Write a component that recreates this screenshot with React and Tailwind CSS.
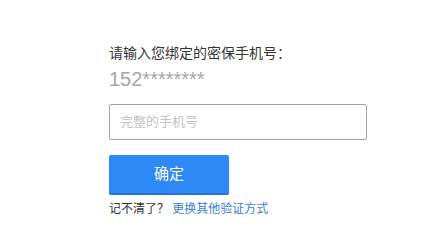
export default function App() {
  const font = { fontFamily: '"Liberation Sans", "Noto Sans CJK SC", sans-serif' };
  return (
    <div className="w-[422px] h-[246px] bg-white overflow-hidden" style={font}>
      <div className="pl-[109px] pt-[43px] flex flex-col items-start">
        <div className="text-[14px] leading-[20px] text-[#333333]">请输入您绑定的密保手机号：</div>
        <div className="mt-[4px] h-[24px] text-[20px] leading-[24px] text-[#a6a6a6]">152********</div>
        <div className="mt-[13px] w-[258px] h-[36px] border border-[#a3a3a3] rounded-[2px] flex items-center pl-[10px]">
          <span className="text-[13px] text-[#c4c4c4]">完整的手机号</span>
        </div>
        <div className="mt-[15px] w-[120px] h-[40px] bg-[#2e89f6] border-b-2 border-[#2672d6] rounded-[2px] flex items-center justify-center text-white text-[15px]">
          确定
        </div>
        <div className="mt-[6px] text-[12px] leading-[16px] whitespace-pre">
          <span className="text-[#333333]">记不清了？ </span>
          <span className="text-[#3c7bd6]">更换其他验证方式</span>
        </div>
      </div>
    </div>
  );
}
